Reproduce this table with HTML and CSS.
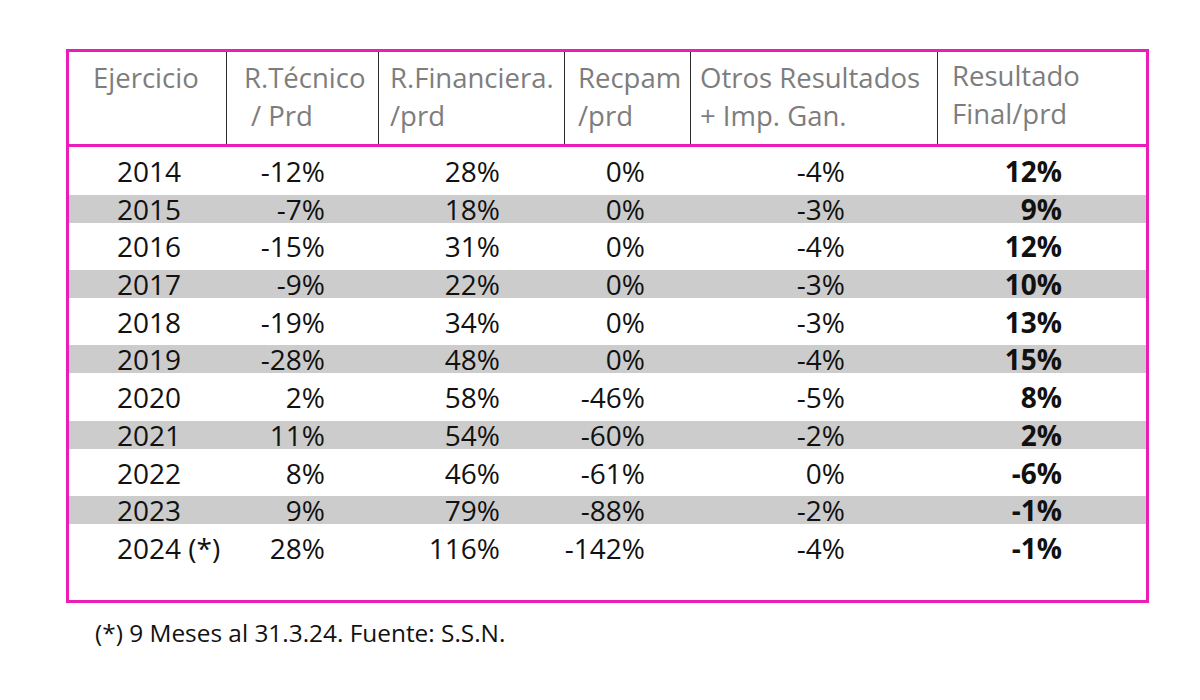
FILE: index.html
```html
<!DOCTYPE html>
<html lang="es">
<head>
<meta charset="utf-8">
<title>Resultados</title>
<link rel="stylesheet" href="styles.css">
</head>
<body>
<div class="page">
  <div class="table">
    <div class="head">
      <div class="hc c1">Ejercicio</div>
      <div class="hc c2">R.Técnico<br><span class="indent">/ Prd</span></div>
      <div class="hc c3">R.Financiera.<br>/prd</div>
      <div class="hc c4">Recpam<br>/prd</div>
      <div class="hc c5">Otros Resultados<br>+ Imp. Gan.</div>
      <div class="hc c6 up">Resultado<br>Final/prd</div>
    </div>
    <div class="body">
      <div class="row"><span class="y">2014</span><span class="v2">-12%</span><span class="v3">28%</span><span class="v4">0%</span><span class="v5">-4%</span><span class="v6">12%</span></div>
      <div class="row alt"><span class="y">2015</span><span class="v2">-7%</span><span class="v3">18%</span><span class="v4">0%</span><span class="v5">-3%</span><span class="v6">9%</span></div>
      <div class="row"><span class="y">2016</span><span class="v2">-15%</span><span class="v3">31%</span><span class="v4">0%</span><span class="v5">-4%</span><span class="v6">12%</span></div>
      <div class="row alt"><span class="y">2017</span><span class="v2">-9%</span><span class="v3">22%</span><span class="v4">0%</span><span class="v5">-3%</span><span class="v6">10%</span></div>
      <div class="row"><span class="y">2018</span><span class="v2">-19%</span><span class="v3">34%</span><span class="v4">0%</span><span class="v5">-3%</span><span class="v6">13%</span></div>
      <div class="row alt"><span class="y">2019</span><span class="v2">-28%</span><span class="v3">48%</span><span class="v4">0%</span><span class="v5">-4%</span><span class="v6">15%</span></div>
      <div class="row"><span class="y">2020</span><span class="v2">2%</span><span class="v3">58%</span><span class="v4">-46%</span><span class="v5">-5%</span><span class="v6">8%</span></div>
      <div class="row alt"><span class="y">2021</span><span class="v2">11%</span><span class="v3">54%</span><span class="v4">-60%</span><span class="v5">-2%</span><span class="v6">2%</span></div>
      <div class="row"><span class="y">2022</span><span class="v2">8%</span><span class="v3">46%</span><span class="v4">-61%</span><span class="v5">0%</span><span class="v6">-6%</span></div>
      <div class="row alt"><span class="y">2023</span><span class="v2">9%</span><span class="v3">79%</span><span class="v4">-88%</span><span class="v5">-2%</span><span class="v6">-1%</span></div>
      <div class="row"><span class="y">2024 (*)</span><span class="v2">28%</span><span class="v3">116%</span><span class="v4">-142%</span><span class="v5">-4%</span><span class="v6">-1%</span></div>
    </div>
  </div>
  <p class="note">(*) 9 Meses al 31.3.24. Fuente: S.S.N.</p>
</div>
</body>
</html>
```

FILE: styles.css
```css
html, body {
  margin: 0;
  padding: 0;
  background: #ffffff;
}

.page {
  padding: 49px 0 0 66px;
  font-family: "Open Sans", "Noto Sans", sans-serif;
}

.table {
  width: 1083px;
  box-sizing: border-box;
  border: 3px solid #ec1cbb;
}

.head,
.row {
  display: grid;
  grid-template-columns: 157px 152px 186px 126px 247px 209px;
}

.head {
  height: 92px;
  border-bottom: 3px solid #ec1cbb;
}

.hc {
  color: #7d7d7d;
  font-size: 27.5px;
  line-height: 38px;
  padding-top: 7px;
  white-space: nowrap;
  box-sizing: border-box;
}

.hc + .hc {
  border-left: 1px solid #2a2a2a;
}

.c1 { padding-left: 24px; }
.c2 { padding-left: 17px; }
.c3 { padding-left: 11px; }
.c4 { padding-left: 13px; }
.c5 { padding-left: 9px; }
.c6 { padding-left: 14px; }
.up { padding-top: 5px; }

.indent { padding-left: 7px; }

.body {
  display: flex;
  flex-direction: column;
  gap: 9.7px;
  padding: 10px 0 38px;
}

.row {
  height: 28px;
  align-items: center;
  font-size: 28px;
  line-height: 28px;
  color: #111111;
}

.row.alt {
  background: #cccccc;
}

.row span {
  white-space: nowrap;
  text-align: right;
}

.row .y { text-align: left; padding-left: 48px; }
.row .v2 { padding-right: 53px; }
.row .v3 { padding-right: 64px; }
.row .v4 { padding-right: 45px; }
.row .v5 { padding-right: 92px; }
.row .v6 { padding-right: 84px; font-weight: 700; }

.note {
  margin: 14px 0 0 29px;
  font-size: 24.4px;
  line-height: 32px;
  color: #111111;
}
```
